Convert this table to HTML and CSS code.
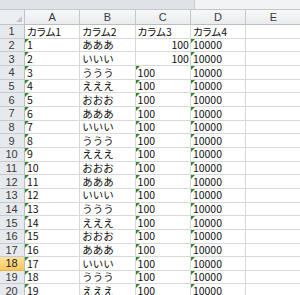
FILE: index.html
```html
<!DOCTYPE html>
<html lang="ja">
<head>
<meta charset="utf-8">
<link rel="stylesheet" href="styles.css">
</head>
<body>
<div class="topband"><div class="tb-left"></div><div class="tb-right"></div></div>
<div class="sheet">
  <div class="corner"><span class="tri"></span></div>
  <div class="ch">A</div><div class="ch">B</div><div class="ch">C</div><div class="ch">D</div><div class="ch">E</div>

  <div class="rh">1</div><div class="c k">カラム1</div><div class="c k">カラム2</div><div class="c k">カラム3</div><div class="c k">カラム4</div><div class="c"></div>
  <div class="rh">2</div><div class="c g">1</div><div class="c">あああ</div><div class="c r">100</div><div class="c g">10000</div><div class="c"></div>
  <div class="rh">3</div><div class="c g">2</div><div class="c">いいい</div><div class="c r">100</div><div class="c g">10000</div><div class="c"></div>
  <div class="rh">4</div><div class="c g">3</div><div class="c">ううう</div><div class="c g">100</div><div class="c g">10000</div><div class="c"></div>
  <div class="rh">5</div><div class="c g">4</div><div class="c">えええ</div><div class="c g">100</div><div class="c g">10000</div><div class="c"></div>
  <div class="rh">6</div><div class="c g">5</div><div class="c">おおお</div><div class="c g">100</div><div class="c g">10000</div><div class="c"></div>
  <div class="rh">7</div><div class="c g">6</div><div class="c">あああ</div><div class="c g">100</div><div class="c g">10000</div><div class="c"></div>
  <div class="rh">8</div><div class="c g">7</div><div class="c">いいい</div><div class="c g">100</div><div class="c g">10000</div><div class="c"></div>
  <div class="rh">9</div><div class="c g">8</div><div class="c">ううう</div><div class="c g">100</div><div class="c g">10000</div><div class="c"></div>
  <div class="rh">10</div><div class="c g">9</div><div class="c">えええ</div><div class="c g">100</div><div class="c g">10000</div><div class="c"></div>
  <div class="rh">11</div><div class="c g">10</div><div class="c">おおお</div><div class="c g">100</div><div class="c g">10000</div><div class="c"></div>
  <div class="rh">12</div><div class="c g">11</div><div class="c">あああ</div><div class="c g">100</div><div class="c g">10000</div><div class="c"></div>
  <div class="rh">13</div><div class="c g">12</div><div class="c">いいい</div><div class="c g">100</div><div class="c g">10000</div><div class="c"></div>
  <div class="rh">14</div><div class="c g">13</div><div class="c">ううう</div><div class="c g">100</div><div class="c g">10000</div><div class="c"></div>
  <div class="rh">15</div><div class="c g">14</div><div class="c">えええ</div><div class="c g">100</div><div class="c g">10000</div><div class="c"></div>
  <div class="rh">16</div><div class="c g">15</div><div class="c">おおお</div><div class="c g">100</div><div class="c g">10000</div><div class="c"></div>
  <div class="rh">17</div><div class="c g">16</div><div class="c">あああ</div><div class="c g">100</div><div class="c g">10000</div><div class="c"></div>
  <div class="rh sel">18</div><div class="c g">17</div><div class="c">いいい</div><div class="c g">100</div><div class="c g">10000</div><div class="c"></div>
  <div class="rh">19</div><div class="c g">18</div><div class="c">ううう</div><div class="c g">100</div><div class="c g">10000</div><div class="c"></div>
  <div class="rh">20</div><div class="c g">19</div><div class="c">えええ</div><div class="c g">100</div><div class="c g">10000</div><div class="c"></div>
</div>
</body>
</html>
```
FILE: styles.css
```css
html, body {
  margin: 0;
  padding: 0;
  background: #ffffff;
  width: 300px;
  height: 295px;
  overflow: hidden;
}
body {
  font-family: "Noto Sans CJK JP", "DejaVu Sans", sans-serif;
  font-size: 10.5px;
  color: #111;
}
.topband {
  display: flex;
  height: 10px;
  box-sizing: border-box;
  border-bottom: 1px solid #c3c7cc;
}
.tb-left {
  width: 194px;
  background: #dfe2e6;
  border-right: 1px solid #c9ccd0;
}
.tb-right {
  flex: 1;
  background: #f2f3f4;
}
.sheet {
  display: grid;
  grid-template-columns: 25px repeat(5, 55.3px);
  grid-template-rows: 15px;
  grid-auto-rows: 13.66px;
}
.corner {
  background: #eceef1;
  border-right: 1px solid #bfc4ca;
  border-bottom: 1px solid #bfc4ca;
  box-sizing: border-box;
  display: flex;
  justify-content: flex-end;
  align-items: flex-end;
  padding: 0 2px 2px 0;
}
.tri {
  width: 0;
  height: 0;
  border-left: 6px solid transparent;
  border-bottom: 6px solid #c2c6cb;
}
.ch {
  background: linear-gradient(#f7f8f9, #e9ebee);
  border-right: 1px solid #c5c9ce;
  border-bottom: 1px solid #b9bec4;
  box-sizing: border-box;
  display: flex;
  align-items: center;
  justify-content: center;
  font-family: "Liberation Sans", "DejaVu Sans", sans-serif;
  font-size: 11px;
  color: #3a3a3a;
}
.rh {
  background: #e6e9ed;
  border-right: 1px solid #b9bec4;
  border-bottom: 1px solid #c8ccd1;
  box-sizing: border-box;
  display: flex;
  align-items: center;
  justify-content: center;
  font-family: "Liberation Sans", "DejaVu Sans", sans-serif;
  font-size: 11px;
  color: #3a3a3a;
  padding-right: 1px;
}
.rh.sel {
  background: linear-gradient(#fce3a0, #f7c85c);
  border-bottom-color: #e5b450;
  color: #222;
}
.c {
  position: relative;
  border-right: 1px solid #d9d9d9;
  border-bottom: 1px solid #d9d9d9;
  box-sizing: border-box;
  display: flex;
  align-items: center;
  padding: 1px 2px 0 2px;
  white-space: nowrap;
  overflow: hidden;
  line-height: 1;
}
.c.k {
  font-feature-settings: "palt";
}
.c.r {
  justify-content: flex-end;
  padding-right: 1px;
}
.c.g::before {
  content: "";
  position: absolute;
  top: 0;
  left: 0;
  width: 0;
  height: 0;
  border-top: 4px solid #2c8a2c;
  border-right: 4px solid transparent;
}
```
